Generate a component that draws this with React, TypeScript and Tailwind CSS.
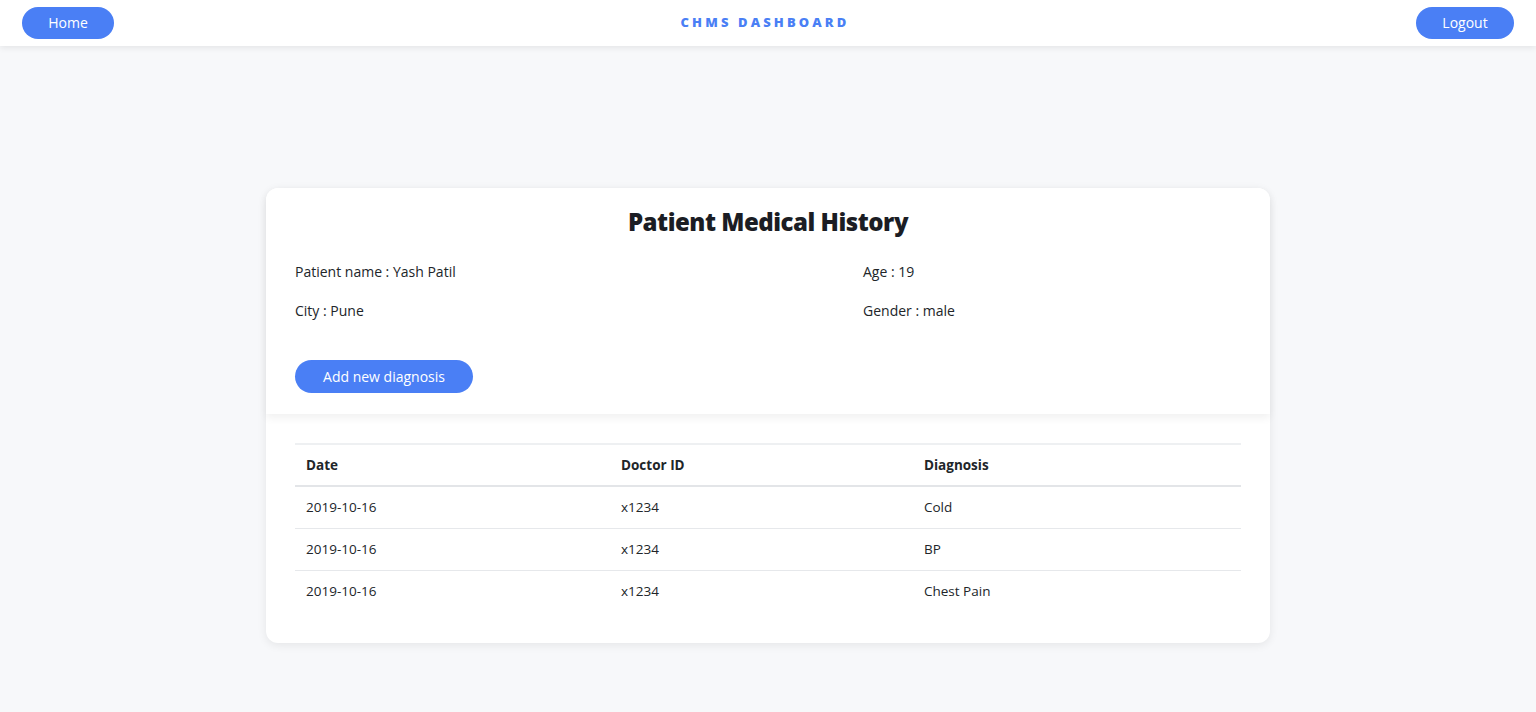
import React from 'react';

const rows = [
  { date: '2019-10-16', doctor: 'x1234', diagnosis: 'Cold' },
  { date: '2019-10-16', doctor: 'x1234', diagnosis: 'BP' },
  { date: '2019-10-16', doctor: 'x1234', diagnosis: 'Chest Pain' },
];

export default function App() {
  return (
    <div className="min-h-screen bg-[#f7f8fa] font-['Open_Sans',sans-serif] text-[#212529]">
      {/* Header */}
      <header className="h-[46px] bg-white shadow-[0_2px_6px_rgba(0,0,0,0.08)] flex items-center justify-between px-[22px]">
        <button className="w-[92px] h-[32px] rounded-full bg-[#4a7ff5] text-white text-[14px] leading-[30px]">
          Home
        </button>
        <h1 className="text-[13px] font-extrabold tracking-[0.24em] text-[#4a7ff5]">
          CHMS DASHBOARD
        </h1>
        <button className="w-[98px] h-[32px] rounded-full bg-[#4a7ff5] text-white text-[14px] leading-[30px]">
          Logout
        </button>
      </header>

      {/* Card */}
      <main className="flex justify-center pt-[142px] pb-[70px]">
        <div className="w-[1004px] bg-white rounded-xl shadow-[0_2px_10px_rgba(0,0,0,0.08)]">
          <section className="rounded-t-xl bg-white shadow-[0_4px_8px_rgba(0,0,0,0.06)] px-[29px] pt-[16px] pb-[21px]">
            <h2 className="text-center text-[24px] font-extrabold text-[#1b1d24] tracking-[-0.02em]">
              Patient Medical History
            </h2>
            <div className="grid grid-cols-[568px_1fr] text-[14px] mt-[22px] gap-y-[19px]">
              <div className="h-[20px] leading-[20px]">Patient name : Yash Patil</div>
              <div className="h-[20px] leading-[20px]">Age : 19</div>
              <div className="h-[20px] leading-[20px]">City : Pune</div>
              <div className="h-[20px] leading-[20px]">Gender : male</div>
            </div>
            <button className="mt-[39px] w-[178px] h-[33px] rounded-full bg-[#4a7ff5] text-white text-[14px]">
              Add new diagnosis
            </button>
          </section>

          <section className="px-[29px] pt-[29px] pb-[31px]">
            <table className="w-full text-[13.5px] border-t-2 border-[#eef0f2]">
              <thead>
                <tr className="h-[42px] border-b-2 border-[#e3e5e8]">
                  <th className="w-[315px] text-left font-bold pl-[11px]">Date</th>
                  <th className="w-[303px] text-left font-bold pl-[11px]">Doctor ID</th>
                  <th className="text-left font-bold pl-[11px]">Diagnosis</th>
                </tr>
              </thead>
              <tbody>
                {rows.map((r, i) => (
                  <tr key={i} className={`h-[42px] ${i < rows.length - 1 ? 'border-b border-[#e6e8eb]' : ''}`}>
                    <td className="pl-[11px]">{r.date}</td>
                    <td className="pl-[11px]">{r.doctor}</td>
                    <td className="pl-[11px]">{r.diagnosis}</td>
                  </tr>
                ))}
              </tbody>
            </table>
          </section>
        </div>
      </main>
    </div>
  );
}
